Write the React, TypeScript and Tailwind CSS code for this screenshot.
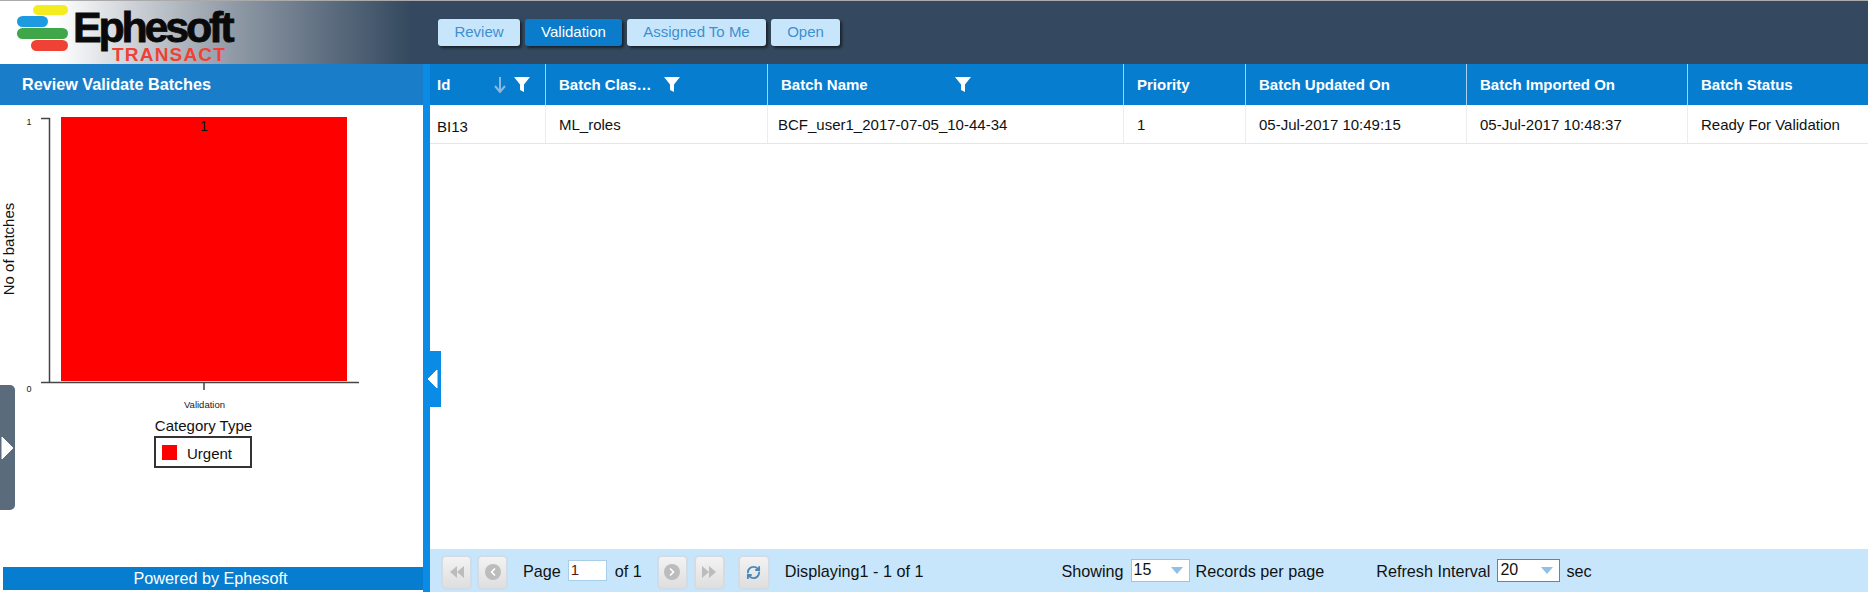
import React from 'react';
import { ChevronLeft, ChevronRight, RefreshCw } from 'lucide-react';

const font = { fontFamily: '"Liberation Sans", Arial, sans-serif' };

function Logo() {
  return (
    <svg width="240" height="63" viewBox="0 0 240 63" className="shrink-0">
      <rect x="33" y="4" width="35" height="10" rx="5" fill="#f5ec1f" />
      <rect x="17" y="15" width="31" height="11" rx="5.500" fill="#1e9be0" />
      <rect x="17" y="27" width="51" height="11" rx="5.500" fill="#3fa64a" />
      <rect x="31" y="39" width="37" height="11" rx="5.500" fill="#ef4136" />
      <text x="73" y="41" fontSize="43" fontWeight="700" fill="#0a0a0a" stroke="#0a0a0a" strokeWidth="0.800" letterSpacing="-3.200" style={font}>
        Ephesoft
      </text>
      <text x="112" y="60" fontSize="19" fontWeight="700" fill="#ef4136" letterSpacing="1.200" style={font}>
        TRANSACT
      </text>
    </svg>
  );
}

function Funnel() {
  return (
    <svg width="16" height="17" viewBox="0 0 16 17" className="shrink-0">
      <path d="M0 1h16L10 8.500V16L6 14V8.500z" fill="#fff" />
    </svg>
  );
}

function TabButton({ label, width, active }: { label: string; width: string; active?: boolean }) {
  return (
    <div
      className={`${width} ${active ? 'bg-[#0a7ccb] text-white' : 'bg-[#c7e6fb] text-[#3f8fd2]'} h-[27px] rounded-[3px] flex items-center justify-center text-[15px] shadow-[2px_2px_3px_rgba(0,0,0,0.55)]`}
    >
      {label}
    </div>
  );
}

function Chart() {
  return (
    <svg width="423" height="462" viewBox="0 0 423 462" className="block" style={font}>
      <rect x="61" y="12" width="286" height="264" fill="#ff0000" />
      <path d="M41 13.500h8.500V277M41 277.500h318M204 277v8" fill="none" stroke="#444" strokeWidth="1.500" />
      <text x="29" y="20" fontSize="9" textAnchor="middle" fill="#222">1</text>
      <text x="29" y="287" fontSize="9" textAnchor="middle" fill="#222">0</text>
      <text x="204" y="26" fontSize="14" textAnchor="middle" fill="#111">1</text>
      <text x="204.500" y="303" fontSize="9.500" textAnchor="middle" fill="#222">Validation</text>
      <text transform="translate(13.600 144) rotate(-90)" fontSize="15" textAnchor="middle" fill="#111">No of batches</text>
      <text x="203.500" y="326" fontSize="15" textAnchor="middle" fill="#111">Category Type</text>
      <rect x="155" y="332" width="96" height="30" fill="#fff" stroke="#333" strokeWidth="2" />
      <rect x="162" y="340" width="15" height="15" fill="#ff0000" />
      <text x="187" y="354" fontSize="15" fill="#111">Urgent</text>
    </svg>
  );
}

const columns = [
  { key: 'id', label: 'Id', width: 'w-[116px]', value: 'BI13' },
  { key: 'class', label: 'Batch Clas…', width: 'w-[222px]', value: 'ML_roles' },
  { key: 'name', label: 'Batch Name', width: 'w-[356px]', value: 'BCF_user1_2017-07-05_10-44-34' },
  { key: 'priority', label: 'Priority', width: 'w-[122px]', value: '1' },
  { key: 'updated', label: 'Batch Updated On', width: 'w-[221px]', value: '05-Jul-2017 10:49:15' },
  { key: 'imported', label: 'Batch Imported On', width: 'w-[221px]', value: '05-Jul-2017 10:48:37' },
  { key: 'status', label: 'Batch Status', width: 'flex-1', value: 'Ready For Validation' },
];

function PagerButton({ children, className = '' }: { children: React.ReactNode; className?: string }) {
  return (
    <div className={`${className} w-[31px] h-[35px] rounded-[5px] border-2 border-[#d3dce4] bg-gradient-to-b from-[#f3f3f3] to-[#dedede] flex items-center justify-center shrink-0`}>
      {children}
    </div>
  );
}

function Triangles({ dir }: { dir: 'left' | 'right' }) {
  return (
    <svg width="14" height="12" viewBox="0 0 14 12">
      <path d={dir === 'left' ? 'M7 0v12L0 6zM14 0v12L7 6z' : 'M0 0v12l7-6zM7 0v12l7-6z'} fill="#bcbcbc" />
    </svg>
  );
}

function Select({ value, className, border }: { value: string; className: string; border: string }) {
  return (
    <div className={`${className} ${border} h-[23px] -mt-[2px] bg-white border flex items-start justify-between pl-[2px] pr-[6px] text-[16px] leading-[19px] text-[#111]`}>
      <span>{value}</span>
      <svg width="12" height="7" viewBox="0 0 12 7" className="mt-[7px]">
        <path d="M0 0h12L6 7z" fill="#8fc0e8" />
      </svg>
    </div>
  );
}

export default function App() {
  return (
    <div className="w-[1868px] h-[592px] overflow-hidden flex flex-col bg-white text-[15px] text-[#111]" style={font}>
      <header className="h-[64px] shrink-0 flex items-center border-t border-[#aaa] bg-gradient-to-r from-white from-[3%] via-[#a0a8b2] via-[11%] to-[#34495f] to-[22%]">
        <Logo />
        <nav className="ml-[198px] mb-[1px] flex gap-[5px]">
          <TabButton label="Review" width="w-[82px]" />
          <TabButton label="Validation" width="w-[97px]" active />
          <TabButton label="Assigned To Me" width="w-[139px]" />
          <TabButton label="Open" width="w-[69px]" />
        </nav>
      </header>

      <div className="flex-1 flex min-h-0 relative">
        <aside className="w-[423px] shrink-0 flex flex-col relative">
          <div className="h-[41px] shrink-0 bg-[#1a7dc9] text-white text-[16.200px] font-bold pl-[22px] flex items-center">
            Review Validate Batches
          </div>
          <div className="flex-1 min-h-0">
            <Chart />
          </div>
          <div className="h-[23px] ml-[3px] mb-[2px] pr-[5px] shrink-0 bg-[#067dcf] text-white text-[16.200px] flex items-center justify-center">
            Powered by Ephesoft
          </div>
          <div className="absolute left-0 top-[321px] w-[15px] h-[125px] bg-[#5a6b7c] rounded-r-[5px] flex items-center">
            <svg width="13" height="24" viewBox="0 0 13 24" className="ml-[1px]">
              <path d="M1 1l11 11L1 23z" fill="#fff" stroke="#fff" strokeLinejoin="round" />
            </svg>
          </div>
        </aside>

        <div className="w-[7px] shrink-0 bg-[#0a8ce6]" />

        <main className="flex-1 min-w-0 flex flex-col relative">
          <div className="h-[41px] shrink-0 flex bg-[#067dcf] text-white font-bold">
            {columns.map((col) => (
              <div key={col.key} className={`${col.width} flex items-center border-r border-[#a9cfee] last:border-r-0 pl-[13px]`}>
                <span className={`pt-[2px] ${col.key === 'id' ? '-ml-[6px]' : ''}`}>{col.label}</span>
                {col.key === 'id' && (
                  <div className="ml-auto mr-[15px] flex items-center gap-[8px]">
                    <svg width="12" height="16" viewBox="0 0 12 16">
                      <path d="M6 0v14M1 9l5 6 5-6" fill="none" stroke="#8ab9e0" strokeWidth="2" />
                    </svg>
                    <Funnel />
                  </div>
                )}
                {col.key === 'class' && (
                  <div className="ml-[12px]">
                    <Funnel />
                  </div>
                )}
                {col.key === 'name' && (
                  <div className="ml-[50px] pl-[37px]">
                    <Funnel />
                  </div>
                )}
              </div>
            ))}
          </div>
          <div className="h-[39px] shrink-0 flex border-b border-[#e6e6e6]">
            {columns.map((col) => (
              <div key={col.key} className={`${col.width} flex items-center border-r border-[#ececec] last:border-r-0 ${col.key === 'id' ? 'pl-[7px] pt-[6px]' : col.key === 'name' ? 'pl-[10px] pt-[2px]' : 'pl-[13px] pt-[2px]'}`}>
                {col.value}
              </div>
            ))}
          </div>
          <div className="flex-1" />
          <footer className="h-[43px] shrink-0 bg-[#c7e6fb] flex items-center text-[16.200px]">
            <PagerButton className="ml-[11px] mt-[3px]"><Triangles dir="left" /></PagerButton>
            <PagerButton className="ml-[5px] mt-[3px]">
              <span className="w-[16px] h-[16px] rounded-full bg-[#bcbcbc] flex items-center justify-center">
                <ChevronLeft size={12} strokeWidth={3.500} color="#fff" />
              </span>
            </PagerButton>
            <span className="ml-[15px] mt-[1px]">Page</span>
            <div className="ml-[7px] w-[39px] h-[21px] bg-white border border-[#a7cfe9] pl-[2px] text-[15px] leading-[17px] text-[#5a1a10]">1</div>
            <span className="ml-[8px] mt-[1px]">of 1</span>
            <PagerButton className="ml-[15px] mt-[3px]">
              <span className="w-[16px] h-[16px] rounded-full bg-[#bcbcbc] flex items-center justify-center">
                <ChevronRight size={12} strokeWidth={3.500} color="#fff" />
              </span>
            </PagerButton>
            <PagerButton className="ml-[6px] mt-[3px]"><Triangles dir="right" /></PagerButton>
            <PagerButton className="ml-[13px] mt-[3px] w-[32px]">
              <RefreshCw size={15} strokeWidth={3} color="#4a88ba" />
            </PagerButton>
            <span className="ml-[15px] mt-[2px]">Displaying1 - 1 of 1</span>
            <div className="ml-[138px] mt-[2px] flex items-center">
              <span>Showing</span>
              <Select value="15" className="ml-[7px] w-[59px]" border="border-[#bcbcbc]" />
              <span className="ml-[6px]">Records per page</span>
              <span className="ml-[52px]">Refresh Interval</span>
              <Select value="20" className="ml-[7px] w-[63px]" border="border-[#3d8fd0]" />
              <span className="ml-[6px]">sec</span>
            </div>
          </footer>
          <div className="absolute -left-[7px] top-[287px] w-[18px] h-[56px] bg-[#0a8ce6] flex items-center">
            <svg width="11" height="20" viewBox="0 0 11 20" className="ml-[4px]">
              <path d="M10 1L1 10l9 9z" fill="#fff" stroke="#fff" strokeLinejoin="round" />
            </svg>
          </div>
        </main>
      </div>
    </div>
  );
}
